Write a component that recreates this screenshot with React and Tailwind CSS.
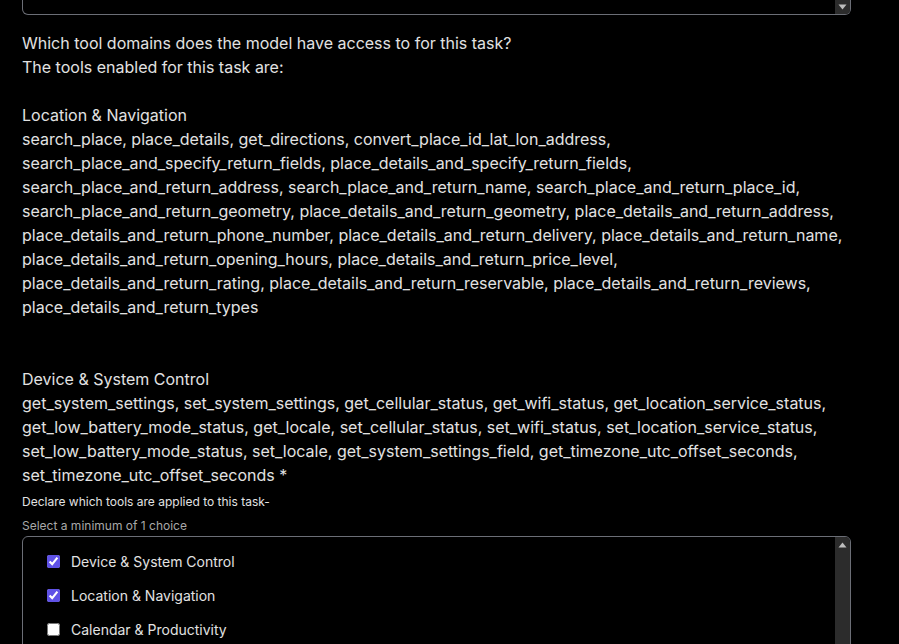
import React from "react";

const loc = [
  "search_place, place_details, get_directions, convert_place_id_lat_lon_address,",
  "search_place_and_specify_return_fields, place_details_and_specify_return_fields,",
  "search_place_and_return_address, search_place_and_return_name, search_place_and_return_place_id,",
  "search_place_and_return_geometry, place_details_and_return_geometry, place_details_and_return_address,",
  "place_details_and_return_phone_number, place_details_and_return_delivery, place_details_and_return_name,",
  "place_details_and_return_opening_hours, place_details_and_return_price_level,",
  "place_details_and_return_rating, place_details_and_return_reservable, place_details_and_return_reviews,",
  "place_details_and_return_types",
];

const dev = [
  "get_system_settings, set_system_settings, get_cellular_status, get_wifi_status, get_location_service_status,",
  "get_low_battery_mode_status, get_locale, set_cellular_status, set_wifi_status, set_location_service_status,",
  "set_low_battery_mode_status, set_locale, get_system_settings_field, get_timezone_utc_offset_seconds,",
  "set_timezone_utc_offset_seconds *",
];

function Line({ children }) {
  return <div className="h-[24px] whitespace-nowrap">{children}</div>;
}

export default function App() {
  return (
    <div
      className="min-h-screen w-full bg-black text-[#e2e2e2] overflow-hidden"
      style={{ fontFamily: "Inter, 'Noto Sans', sans-serif" }}
    >
      <div className="pl-[22px] w-[851px]">
        {/* top textarea remnant */}
        <div className="relative h-[15px] border-x border-b border-[#6b6e76] rounded-b-[6px]">
          <div className="absolute right-0 top-0 h-[14px] w-[15px] bg-[#2c2c2c] flex items-center justify-center rounded-br-[4px]">
            <svg width="9" height="6" viewBox="0 0 9 6">
              <path d="M0.5 0.5 L8.5 0.5 L4.5 5.5 Z" fill="#bdbdbd" />
            </svg>
          </div>
        </div>

        <div className="mt-[16px] text-[16px] leading-[24px]">
          <Line>Which tool domains does the model have access to for this task?</Line>
          <Line>The tools enabled for this task are:</Line>
          <Line> </Line>
          <Line>Location &amp; Navigation</Line>
          {loc.map((l, i) => (
            <Line key={i}>{l}</Line>
          ))}
          <Line> </Line>
          <Line> </Line>
          <Line>Device &amp; System Control</Line>
          {dev.map((l, i) => (
            <Line key={i}>{l}</Line>
          ))}
        </div>

        <div className="mt-[3px] text-[12px] leading-[24px] text-[#e2e2e2]">
          Declare which tools are applied to this task-
        </div>
        <div className="text-[12px] leading-[24px] text-[#a8a8a8]">
          Select a minimum of 1 choice
        </div>

        <div className="relative mt-[-2px] h-[140px] border border-[#6b6e76] rounded-[6px] pt-[7px] pl-[24px]">
          <div className="absolute right-0 top-0 bottom-0 w-[15px] bg-[#2c2c2c] rounded-tr-[5px] flex justify-center pt-[5px]">
            <svg width="9" height="6" viewBox="0 0 9 6">
              <path d="M0.5 5.5 L8.5 5.5 L4.5 0.5 Z" fill="#bdbdbd" />
            </svg>
          </div>
          {[
            ["Device & System Control", true],
            ["Location & Navigation", true],
            ["Calendar & Productivity", false],
          ].map(([label, checked]) => (
            <label key={label} className="flex items-center h-[34px] text-[14px]">
              <input
                type="checkbox"
                defaultChecked={checked}
                className="w-[13px] h-[13px] m-0 accent-[#5f52e6]"
              />
              <span className="ml-[11px]">{label}</span>
            </label>
          ))}
        </div>
      </div>
    </div>
  );
}
